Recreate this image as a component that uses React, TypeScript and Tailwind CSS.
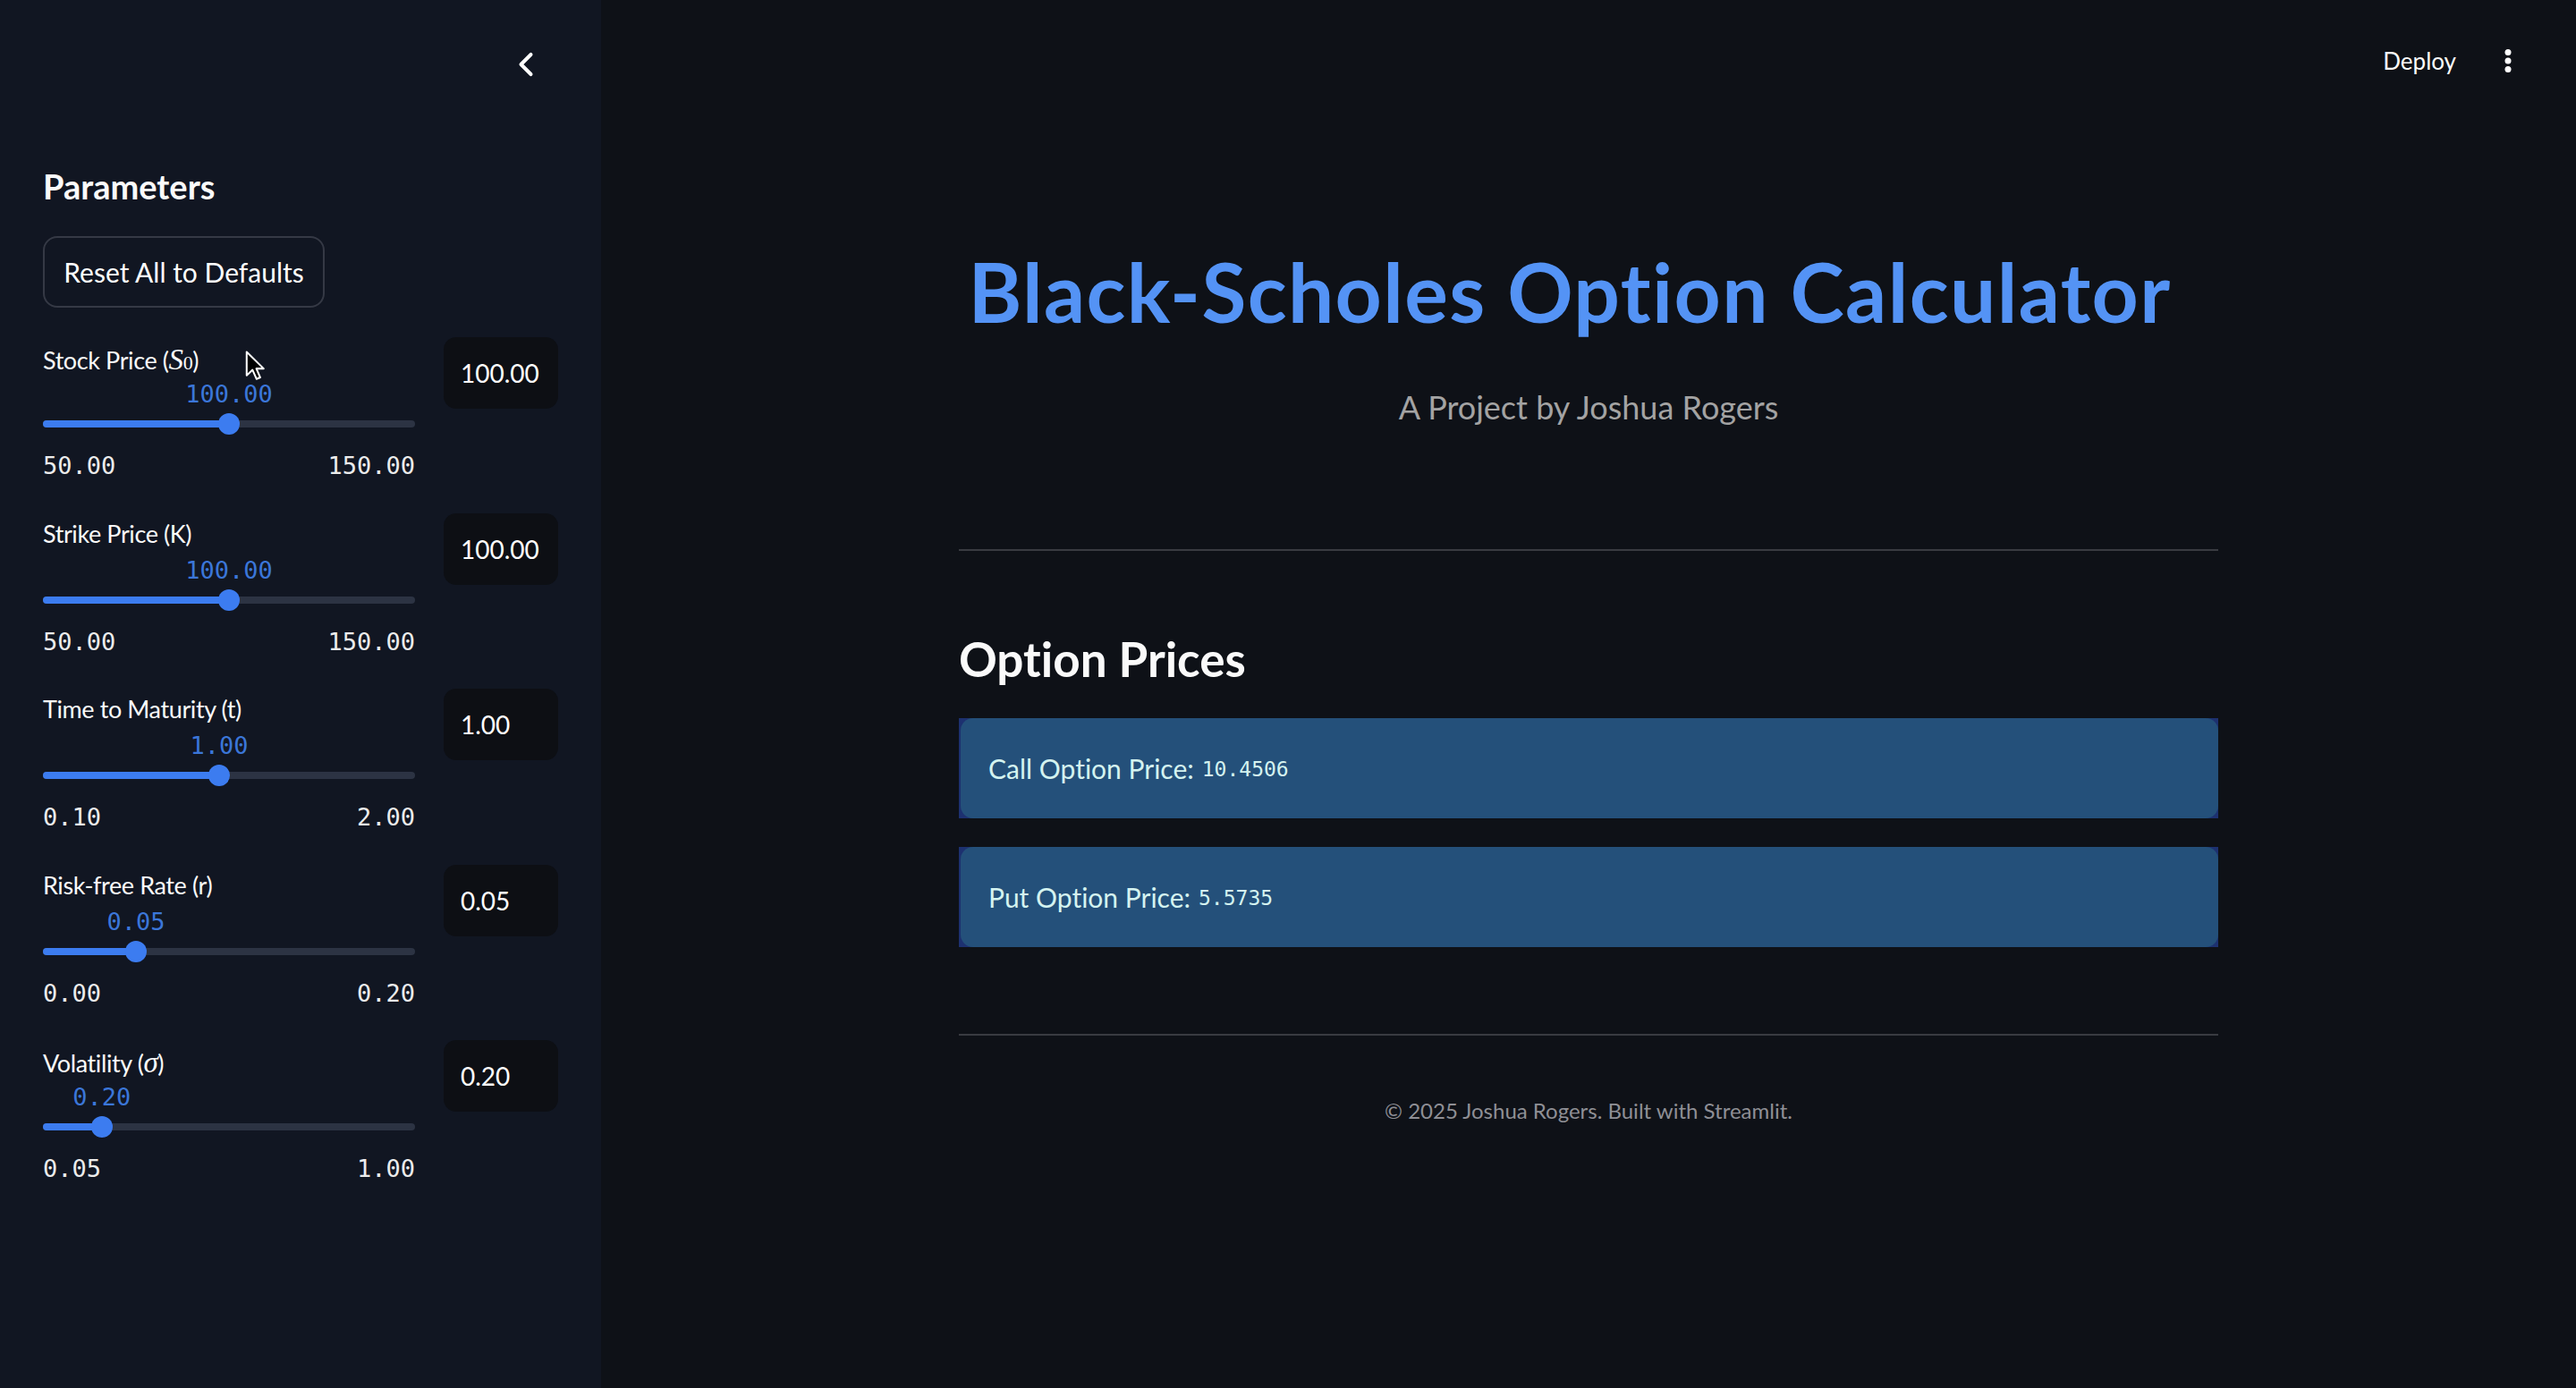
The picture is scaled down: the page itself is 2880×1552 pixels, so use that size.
import type { ReactNode } from "react";
import { ChevronLeft } from "lucide-react";

type Param = {
    label: ReactNode;
    value: number;
    min: number;
    max: number;
};

const Math = ({ children }: { children: ReactNode }) => (
    <span className="font-['Liberation_Serif',serif] text-[33px] italic">{children}</span>
);

const params: Param[] = [
    {
        label: (
            <>
                Stock Price (<Math>S</Math>
                <span className="font-['Liberation_Serif',serif] text-[22px]">0</span>)
            </>
        ),
        value: 100,
        min: 50,
        max: 150,
    },
    { label: "Strike Price (K)", value: 100, min: 50, max: 150 },
    { label: "Time to Maturity (t)", value: 1, min: 0.1, max: 2 },
    { label: "Risk-free Rate (r)", value: 0.05, min: 0, max: 0.2 },
    {
        label: (
            <>
                Volatility (<Math>σ</Math>)
            </>
        ),
        value: 0.2,
        min: 0.05,
        max: 1,
    },
];

const SliderRow = ({ label, value, min, max }: Param) => {
    const pct = ((value - min) / (max - min)) * 100;
    return (
        <div className="flex h-[196.5px] gap-[32px]">
            <div className="w-[416px]">
                <div className="mt-[9px] h-[28px] whitespace-nowrap text-[27px] leading-none tracking-[-0.4px] text-[#fafafa]">
                    {label}
                </div>
                <div className="relative mt-[13px] h-[27px]">
                    <span
                        className="absolute top-0 -translate-x-1/2 font-['DejaVu_Sans_Mono',monospace] text-[27px] leading-none text-[#3b76d9]"
                        style={{ left: `${pct}%` }}
                    >
                        {value.toFixed(2)}
                    </span>
                </div>
                <div className="relative mt-[8px] h-[24px]">
                    <div className="absolute inset-x-0 top-[8px] h-[8px] rounded-full bg-[#2c3343]" />
                    <div className="absolute left-0 top-[8px] h-[8px] rounded-full bg-[#3c7cf0]" style={{ width: `${pct}%` }} />
                    <div
                        className="absolute top-0 h-[24px] w-[24px] -translate-x-1/2 rounded-full bg-[#3c7cf0]"
                        style={{ left: `${pct}%` }}
                    />
                </div>
                <div className="mt-[21px] flex justify-between font-['DejaVu_Sans_Mono',monospace] text-[27px] leading-none text-[#ececec]">
                    <span>{min.toFixed(2)}</span>
                    <span>{max.toFixed(2)}</span>
                </div>
            </div>
            <div className="flex h-[80px] w-[128px] items-center rounded-[14px] bg-[#0d0f14] pl-[19px] text-[28px] text-white">
                {value.toFixed(2)}
            </div>
        </div>
    );
};

const PriceBox = ({ label, price }: { label: string; price: string }) => (
    <div className="bg-[#1d3170] pl-[2px]">
        <div className="flex h-[112px] items-center rounded-[14px] bg-[#24507a] px-[31px] text-[30px] text-[#d4f3f0]">
            <span>{label}</span>
            <span className="ml-[9px] mt-[3px] font-['DejaVu_Sans_Mono',monospace] text-[23px]">{price}</span>
        </div>
    </div>
);

export default function App() {
    return (
        <div className="relative flex h-[1552px] w-full overflow-hidden bg-[#0e1117] font-[Lato,sans-serif] text-[#fafafa] [font-variant-ligatures:none]">
            <aside className="w-[672px] shrink-0 bg-[#111622]">
                <div className="flex justify-end pr-[62px] pt-[50px]">
                    <ChevronLeft size={44} strokeWidth={2.2} className="text-white" />
                </div>
                <div className="px-[48px]">
                    <h2 className="mt-[95px] text-[38px] font-bold leading-none">Parameters</h2>
                    <button className="mt-[37px] flex h-[80px] w-[315px] items-center justify-center rounded-[16px] border-2 border-[#353945] text-[30px] text-white">
                        Reset All to Defaults
                    </button>
                    <div className="mt-[33px]">
                        {params.map((p, i) => (
                            <SliderRow key={i} {...p} />
                        ))}
                    </div>
                </div>
            </aside>

            <main className="min-w-0 flex-1">
                <div className="mt-[54px] flex h-[28px] items-center justify-end gap-[48px] pr-[66px]">
                    <span className="text-[26px] leading-none text-[#fafafa]">Deploy</span>
                    <svg width="20" height="32" viewBox="0 0 20 32" className="text-white">
                        <circle cx="10" cy="6.5" r="3.5" fill="currentColor" />
                        <circle cx="10" cy="16" r="3.5" fill="currentColor" />
                        <circle cx="10" cy="25.5" r="3.5" fill="currentColor" />
                    </svg>
                </div>

                <div className="mx-auto w-[1408px]">
                    <h1 className="mt-[198px] pr-[42px] text-center text-[91px] font-bold leading-none tracking-[1.4px] text-[#5493f5]">
                        Black-Scholes Option Calculator
                    </h1>
                    <p className="mt-[66px] text-center text-[36px] leading-none text-[#a3a3a3]">A Project by Joshua Rogers</p>
                    <hr className="mt-[141px] border-t-2 border-[#393b41]" />
                    <h3 className="mt-[94px] text-[53px] font-bold leading-none text-[#fafafa]">Option Prices</h3>
                    <div className="mt-[40px] flex flex-col gap-[32px]">
                        <PriceBox label="Call Option Price:" price="10.4506" />
                        <PriceBox label="Put Option Price:" price="5.5735" />
                    </div>
                    <hr className="mt-[97px] border-t-2 border-[#393b41]" />
                    <p className="mt-[72px] text-center text-[24px] leading-none text-[#8e8f95]">
                        © 2025 Joshua Rogers. Built with Streamlit.
                    </p>
                </div>
            </main>

            <svg width="24" height="35" viewBox="0 0 16 24" className="absolute left-[274px] top-[392px]">
                <path
                    d="M1 1 L1 19 L5.5 14.8 L8.6 21.8 L11.4 20.6 L8.4 13.8 L14 13.8 Z"
                    fill="#000"
                    stroke="#fff"
                    strokeWidth="1.4"
                    strokeLinejoin="round"
                />
            </svg>
        </div>
    );
}
